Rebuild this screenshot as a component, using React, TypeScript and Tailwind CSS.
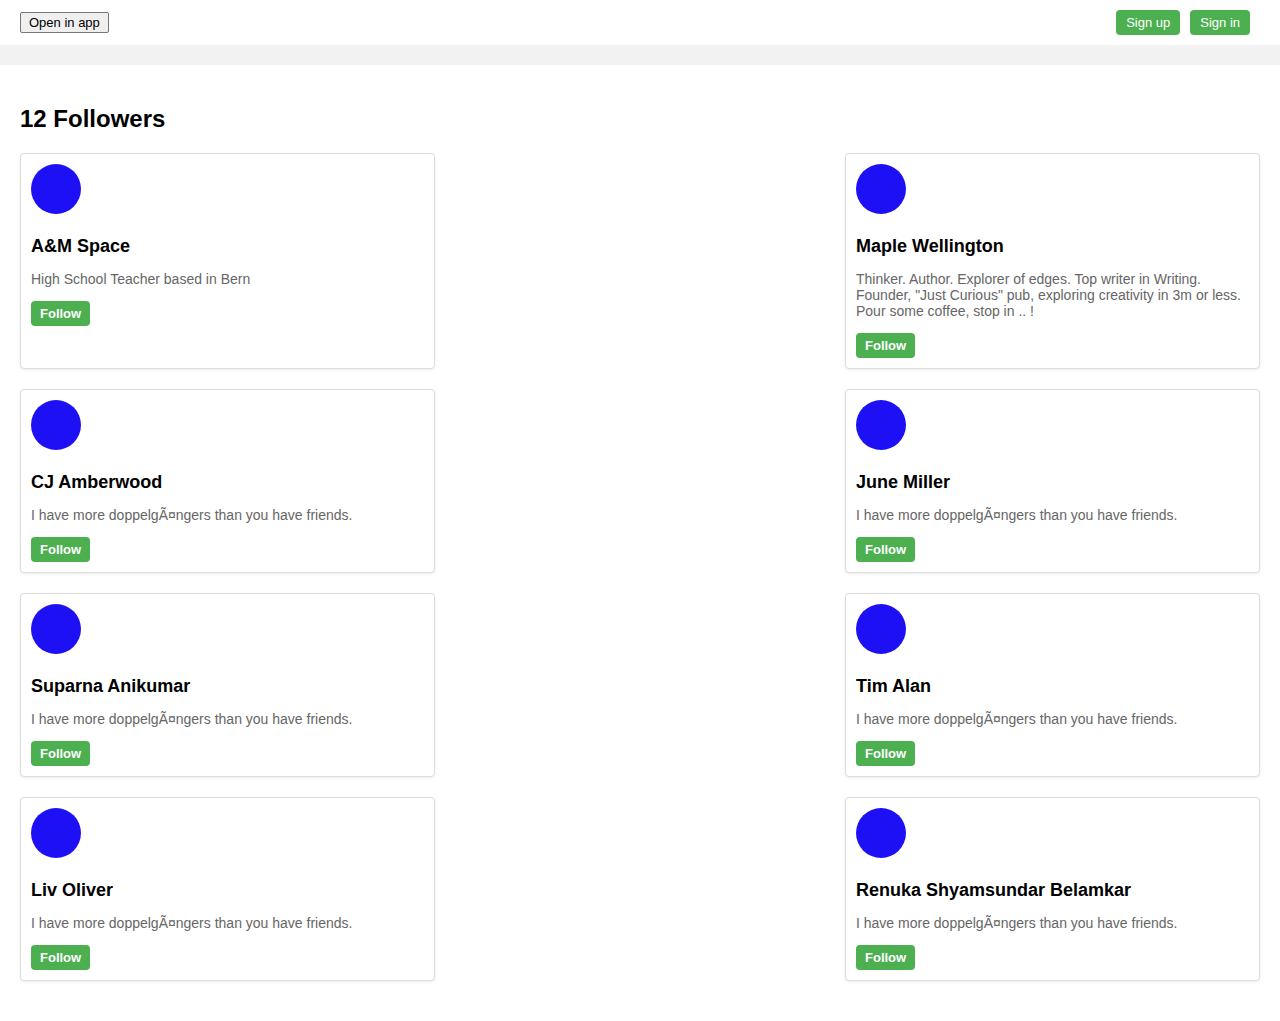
const followers = [
  { name: "A&M Space", bio: "High School Teacher based in Bern" },
  {
    name: "Maple Wellington",
    bio: 'Thinker. Author. Explorer of edges. Top writer in Writing. Founder, "Just Curious" pub, exploring creativity in 3m or less. Pour some coffee, stop in .. !',
  },
  { name: "CJ Amberwood", bio: "I have more doppelgÃ¤ngers than you have friends." },
  { name: "June Miller", bio: "I have more doppelgÃ¤ngers than you have friends." },
  { name: "Suparna Anikumar", bio: "I have more doppelgÃ¤ngers than you have friends." },
  { name: "Tim Alan", bio: "I have more doppelgÃ¤ngers than you have friends." },
  { name: "Liv Oliver", bio: "I have more doppelgÃ¤ngers than you have friends." },
  { name: "Renuka Shyamsundar Belamkar", bio: "I have more doppelgÃ¤ngers than you have friends." },
];

function FollowerCard({ name, bio }: { name: string; bio: string }) {
  return (
    <div className="flex flex-col items-start border border-[#dddddd] rounded-[4px] bg-white p-[10px] shadow-[0_1px_3px_rgba(0,0,0,0.08)]">
      <div className="w-[50px] h-[50px] rounded-full bg-[#1e10f5]" />
      <h3 className="mt-[22px] text-[18px] leading-[21px] font-bold text-black">{name}</h3>
      <p className="mt-[14px] text-[14px] leading-[16px] text-[#666666]">{bio}</p>
      <button className="mt-[14px] h-[25px] px-[9px] rounded-[4px] bg-[#4caf50] text-white text-[13px] font-bold">
        Follow
      </button>
    </div>
  );
}

export default function App() {
  return (
    <div className="min-h-[1021px] bg-white font-['Liberation_Sans',Arial,sans-serif] text-black">
      <header className="h-[45px] flex items-center justify-between px-[20px]">
        <button className="h-[21px] px-[8px] text-[13px] leading-[15px] text-black bg-[#efefef] border border-[#767676] rounded-[2px]">
          Open in app
        </button>
        <div className="flex items-center gap-[10px] mr-[10px]">
          <button className="h-[25px] px-[10px] rounded-[4px] bg-[#4caf50] text-white text-[13px]">
            Sign up
          </button>
          <button className="h-[25px] px-[10px] rounded-[4px] bg-[#4caf50] text-white text-[13px]">
            Sign in
          </button>
        </div>
      </header>
      <div className="h-[20px] bg-[#f2f2f2]" />

      <main className="px-[20px] pt-[40px] pb-[20px]">
        <h2 className="text-[24px] leading-[28px] font-bold">12 Followers</h2>
        <div className="mt-[20px] grid grid-cols-[415px_415px] justify-between gap-y-[20px]">
          {followers.map((f) => (
            <FollowerCard key={f.name} name={f.name} bio={f.bio} />
          ))}
        </div>
      </main>
    </div>
  );
}
